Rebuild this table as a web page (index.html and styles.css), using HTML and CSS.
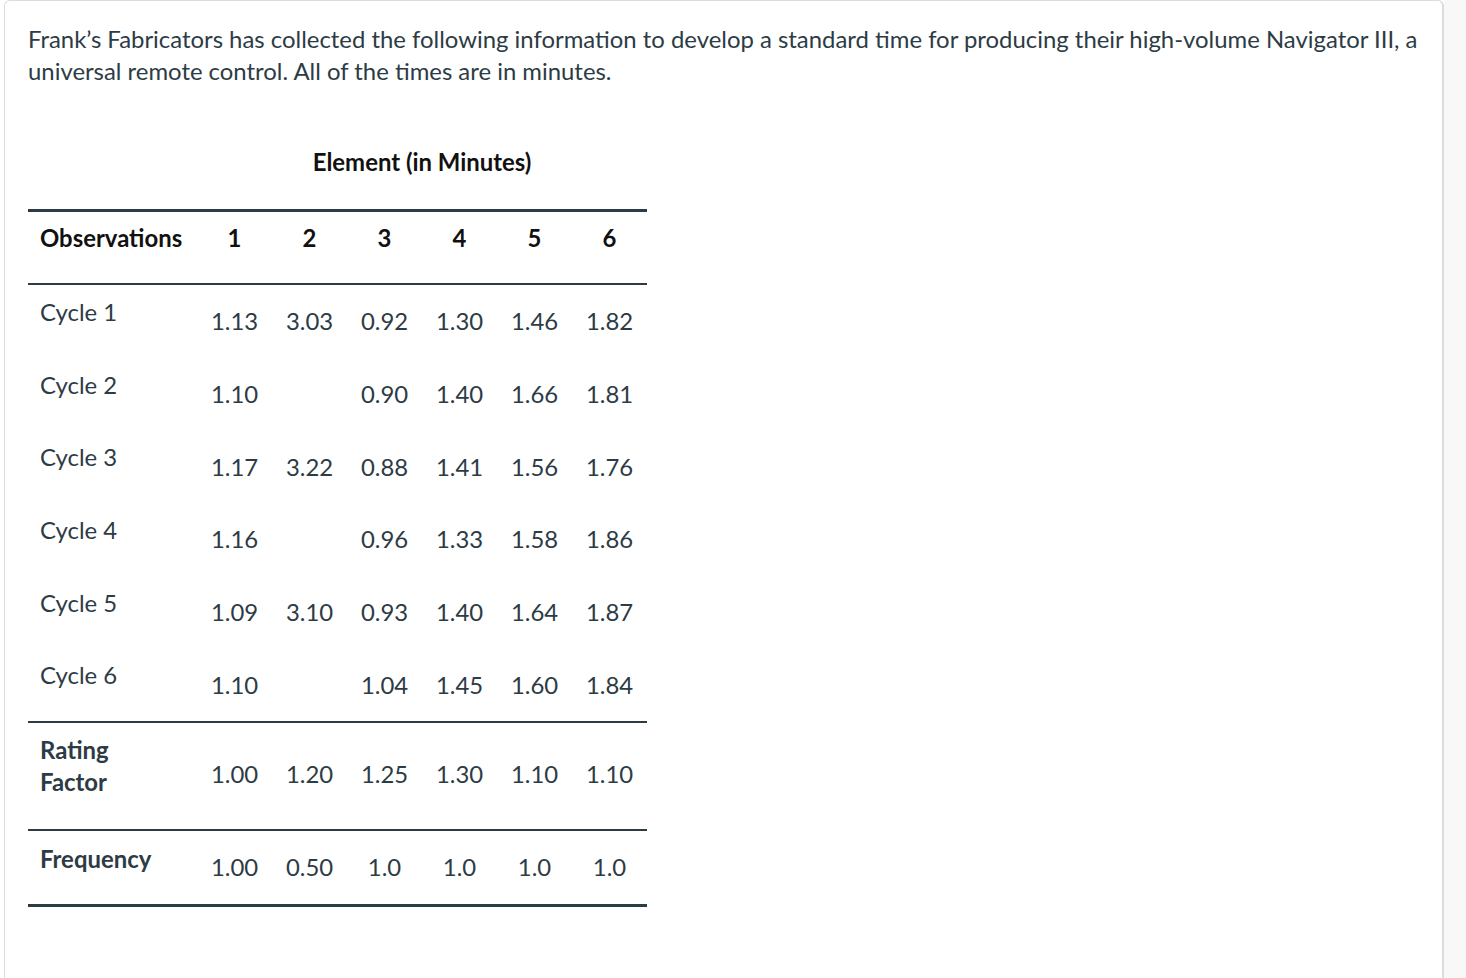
FILE: index.html
```html
<!DOCTYPE html>
<html lang="en">
<head>
<meta charset="utf-8">
<title>Frank's Fabricators</title>
<link rel="stylesheet" href="styles.css">
</head>
<body>
<div class="page">
  <div class="card">
    <p class="intro">Frank’s Fabricators has collected the following information to develop a standard time for producing their high-volume Navigator III, a universal remote control. All of the times are in minutes.</p>
    <table class="data">
      <colgroup>
        <col class="col-label">
        <col class="col-val"><col class="col-val"><col class="col-val">
        <col class="col-val"><col class="col-val"><col class="col-val">
      </colgroup>
      <tr class="caption-row">
        <td class="blank"></td>
        <td class="caption" colspan="6">Element (in Minutes)</td>
      </tr>
      <tr class="head">
        <th class="label">Observations</th>
        <th>1</th><th>2</th><th>3</th><th>4</th><th>5</th><th>6</th>
      </tr>
      <tr class="cycle">
        <td class="label">Cycle 1</td>
        <td>1.13</td><td>3.03</td><td>0.92</td><td>1.30</td><td>1.46</td><td>1.82</td>
      </tr>
      <tr class="cycle">
        <td class="label">Cycle 2</td>
        <td>1.10</td><td></td><td>0.90</td><td>1.40</td><td>1.66</td><td>1.81</td>
      </tr>
      <tr class="cycle">
        <td class="label">Cycle 3</td>
        <td>1.17</td><td>3.22</td><td>0.88</td><td>1.41</td><td>1.56</td><td>1.76</td>
      </tr>
      <tr class="cycle">
        <td class="label">Cycle 4</td>
        <td>1.16</td><td></td><td>0.96</td><td>1.33</td><td>1.58</td><td>1.86</td>
      </tr>
      <tr class="cycle">
        <td class="label">Cycle 5</td>
        <td>1.09</td><td>3.10</td><td>0.93</td><td>1.40</td><td>1.64</td><td>1.87</td>
      </tr>
      <tr class="cycle">
        <td class="label">Cycle 6</td>
        <td>1.10</td><td></td><td>1.04</td><td>1.45</td><td>1.60</td><td>1.84</td>
      </tr>
      <tr class="rating">
        <td class="label strong">Rating<br>Factor</td>
        <td>1.00</td><td>1.20</td><td>1.25</td><td>1.30</td><td>1.10</td><td>1.10</td>
      </tr>
      <tr class="freq">
        <td class="label strong">Frequency</td>
        <td>1.00</td><td>0.50</td><td>1.0</td><td>1.0</td><td>1.0</td><td>1.0</td>
      </tr>
    </table>
  </div>
  <div class="rest"></div>
</div>
</body>
</html>
```

FILE: styles.css
```css
html, body {
  margin: 0;
  padding: 0;
  background: #ffffff;
}

body {
  font-family: Lato, "Open Sans", "Liberation Sans", sans-serif;
  color: #2d3b45;
  font-size: 23.9px;
  line-height: 32px;
}

.page {
  display: flex;
  min-height: 978px;
  padding-left: 4px;
}

.card {
  width: 1400px;
  min-height: 1000px;
  border: 1px solid #dcdcdc;
  border-right: 2px solid #dcdcdc;
  border-radius: 6px;
  padding: 22px 14px 0 23px;
  box-sizing: content-box;
  flex: none;
}

.rest {
  flex: 1;
  background: #f8f8f8;
}

.intro {
  margin: 0;
}

.data {
  margin-top: 59px;
  border-collapse: separate;
  border-spacing: 0;
  width: 619px;
  table-layout: fixed;
}

.col-label {
  width: 169px;
}

.col-val {
  width: 75px;
}

.data td,
.data th {
  padding: 0;
  text-align: center;
  vertical-align: middle;
  white-space: nowrap;
}

.data .label {
  text-align: left;
  padding-left: 12px;
  vertical-align: top;
}

.caption-row .caption {
  font-weight: 700;
  color: #111111;
  padding-bottom: 31px;
}

.head th {
  font-weight: 700;
  color: #111111;
  border-top: 3px solid #2d3b45;
  border-bottom: 2px solid #2d3b45;
  padding-top: 10px;
  padding-bottom: 29px;
  vertical-align: top;
}

.cycle {
  height: 72.67px;
}

.cycle td.label {
  padding-top: 11px;
}

.rating {
  height: 108px;
}

.rating td {
  border-top: 2px solid #2d3b45;
  padding-bottom: 3px;
}

.rating td.label {
  padding-top: 11px;
  padding-bottom: 0;
}

.freq {
  height: 78px;
}

.freq td {
  border-top: 2px solid #2d3b45;
  border-bottom: 3px solid #2d3b45;
}

.freq td.label {
  padding-top: 12px;
}

.strong {
  font-weight: 700;
}
```
